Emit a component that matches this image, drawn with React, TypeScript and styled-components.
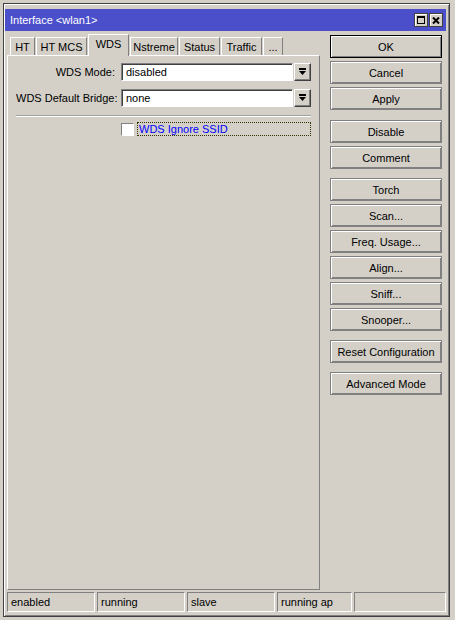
import React from 'react';
import styled, { createGlobalStyle } from 'styled-components';

const GlobalStyle = createGlobalStyle`
  html, body {
    margin: 0;
    padding: 0;
    background: #d4d0c8;
  }
  body {
    font-family: "Liberation Sans", Arial, sans-serif;
    font-size: 11px;
    color: #000;
  }
`;

const Window = styled.div`
  margin: 3px 0 0 3px;
  width: 447px;
  height: 614px;
  box-sizing: border-box;
  border: 1px solid #404040;
  box-shadow: inset 1px 1px #ffffff, inset -1px -1px #808080;
  background: #d4d0c8;
  padding: 5px 3px 0 1px;
  display: flex;
  flex-direction: column;
`;

const TitleBar = styled.div`
  height: 22px;
  background: #4b4fc9;
  color: #fff;
  display: flex;
  align-items: center;
  padding: 0 3px 0 5px;
`;

const TitleText = styled.div`
  flex: 1;
  font-size: 11px;
  line-height: 22px;
`;

const TitleButton = styled.div`
  width: 14px;
  height: 14px;
  box-sizing: border-box;
  background: #d4d0c8;
  border: 1px solid #404040;
  box-shadow: inset 1px 1px #ffffff;
  display: flex;
  align-items: center;
  justify-content: center;
  margin-left: 1px;
`;

const Main = styled.div`
  display: flex;
  margin-top: 2px;
  padding-left: 2px;
`;

const LeftCol = styled.div`
  width: 313px;
  display: flex;
  flex-direction: column;
`;

const TabRow = styled.div`
  height: 22px;
  display: flex;
  align-items: flex-end;
  padding-left: 3px;
  gap: 1px;
`;

const Tab = styled.div<{ $active?: boolean; $w: number }>`
  width: ${p => p.$w}px;
  height: ${p => (p.$active ? 22 : 18)}px;
  box-sizing: border-box;
  border-top: 1px solid #ffffff;
  border-left: 1px solid #ffffff;
  border-right: 1px solid #808080;
  background: #d4d0c8;
  display: flex;
  align-items: center;
  justify-content: center;
  font-size: 11px;
  padding-bottom: ${p => (p.$active ? 3 : 0)}px;
  margin-bottom: ${p => (p.$active ? -1 : 0)}px;
  position: relative;
  z-index: ${p => (p.$active ? 1 : 0)};
`;

const Panel = styled.div`
  height: 535px;
  box-sizing: border-box;
  border-top: 1px solid #ffffff;
  border-left: 1px solid #ffffff;
  border-right: 1px solid #808080;
  border-bottom: 1px solid #808080;
  padding: 7px 8px 0 8px;
`;

const FieldRow = styled.div`
  display: flex;
  align-items: center;
  height: 18px;
  margin-bottom: 8px;
`;

const Label = styled.div`
  width: 99px;
  text-align: right;
  padding-right: 6px;
  white-space: nowrap;
`;

const Input = styled.div`
  width: 172px;
  height: 18px;
  box-sizing: border-box;
  background: #fff;
  border-top: 1px solid #808080;
  border-left: 1px solid #808080;
  border-bottom: 1px solid #ffffff;
  border-right: 1px solid #ffffff;
  box-shadow: inset 1px 1px #404040;
  padding-left: 4px;
  line-height: 16px;
`;

const DropButton = styled.div`
  width: 17px;
  height: 18px;
  margin-left: 1px;
  box-sizing: border-box;
  border-top: 1px solid #ffffff;
  border-left: 1px solid #ffffff;
  border-bottom: 1px solid #404040;
  border-right: 1px solid #404040;
  box-shadow: inset -1px -1px #808080;
  display: flex;
  align-items: center;
  justify-content: center;
`;

const Separator = styled.div`
  height: 0;
  border-top: 1px solid #a0a0a0;
  border-bottom: 1px solid #ffffff;
  margin: 1px 0 5px 0;
`;

const CheckRow = styled.div`
  display: flex;
  align-items: center;
  padding-left: 105px;
  height: 14px;
`;

const CheckBox = styled.div`
  width: 13px;
  height: 13px;
  box-sizing: border-box;
  background: #fff;
  border-top: 1px solid #808080;
  border-left: 1px solid #808080;
  border-bottom: 1px solid #ffffff;
  border-right: 1px solid #ffffff;
`;

const CheckLabel = styled.div`
  margin-left: 3px;
  flex: 1;
  height: 14px;
  box-sizing: border-box;
  border: 1px dotted #303000;
  color: #0000ff;
  line-height: 12px;
  padding-left: 1px;
`;

const RightCol = styled.div`
  width: 112px;
  margin-left: 10px;
  padding-top: 2px;
  display: flex;
  flex-direction: column;
  gap: 3px;
`;

const Button = styled.div<{ $default?: boolean; $gapBefore?: number }>`
  height: 23px;
  box-sizing: border-box;
  border: 1px solid ${p => (p.$default ? '#000' : '#808080')};
  box-shadow: inset 1px 1px #ffffff, inset -1px -1px #808080;
  display: flex;
  align-items: center;
  justify-content: center;
  margin-top: ${p => p.$gapBefore ?? 0}px;
`;

const StatusBar = styled.div`
  display: flex;
  margin-top: 2px;
  padding-left: 2px;
`;

const StatusCell = styled.div<{ $w: number; $gap: number }>`
  width: ${p => p.$w}px;
  margin-right: ${p => p.$gap}px;
  height: 20px;
  box-sizing: border-box;
  border-top: 1px solid #808080;
  border-left: 1px solid #808080;
  border-bottom: 1px solid #ffffff;
  border-right: 1px solid #ffffff;
  padding-left: 3px;
  line-height: 18px;
`;

const DropArrow = () => (
  <svg width="7" height="8" viewBox="0 0 7 8">
    <rect x="0" y="0" width="7" height="2" fill="#000" />
    <polygon points="0,3 7,3 3.5,7" fill="#000" />
  </svg>
);

const tabs = [
  { label: 'HT', w: 25 },
  { label: 'HT MCS', w: 51 },
  { label: 'WDS', w: 41, active: true },
  { label: 'Nstreme', w: 48 },
  { label: 'Status', w: 41 },
  { label: 'Traffic', w: 41 },
  { label: '...', w: 20 },
];

const buttons: { label: string; gap?: number; def?: boolean }[] = [
  { label: 'OK', def: true },
  { label: 'Cancel' },
  { label: 'Apply' },
  { label: 'Disable', gap: 7 },
  { label: 'Comment' },
  { label: 'Torch', gap: 6 },
  { label: 'Scan...' },
  { label: 'Freq. Usage...' },
  { label: 'Align...' },
  { label: 'Sniff...' },
  { label: 'Snooper...' },
  { label: 'Reset Configuration', gap: 6 },
  { label: 'Advanced Mode', gap: 6 },
];

const status = [
  { text: 'enabled', w: 88, gap: 2 },
  { text: 'running', w: 88, gap: 2 },
  { text: 'slave', w: 88, gap: 2 },
  { text: 'running ap', w: 75, gap: 2 },
  { text: '', w: 92, gap: 0 },
];

export default function App() {
  return (
    <>
      <GlobalStyle />
      <Window>
        <TitleBar>
          <TitleText>Interface &lt;wlan1&gt;</TitleText>
          <TitleButton>
            <svg width="8" height="8" viewBox="0 0 8 8">
              <rect x="0.5" y="0.5" width="7" height="7" fill="none" stroke="#000" />
              <rect x="0" y="0" width="8" height="2" fill="#000" />
            </svg>
          </TitleButton>
          <TitleButton>
            <svg width="8" height="7" viewBox="0 0 8 7">
              <path d="M1 0.5 L7 6.5 M7 0.5 L1 6.5" stroke="#000" strokeWidth="2" />
            </svg>
          </TitleButton>
        </TitleBar>
        <Main>
          <LeftCol>
            <TabRow>
              {tabs.map(t => (
                <Tab key={t.label} $w={t.w} $active={t.active}>
                  {t.label}
                </Tab>
              ))}
            </TabRow>
            <Panel>
              <FieldRow>
                <Label>WDS Mode:</Label>
                <Input>disabled</Input>
                <DropButton>
                  <DropArrow />
                </DropButton>
              </FieldRow>
              <FieldRow>
                <Label>WDS Default Bridge:</Label>
                <Input>none</Input>
                <DropButton>
                  <DropArrow />
                </DropButton>
              </FieldRow>
              <Separator />
              <CheckRow>
                <CheckBox />
                <CheckLabel>WDS Ignore SSID</CheckLabel>
              </CheckRow>
            </Panel>
          </LeftCol>
          <RightCol>
            {buttons.map(b => (
              <Button key={b.label} $default={b.def} $gapBefore={b.gap}>
                {b.label}
              </Button>
            ))}
          </RightCol>
        </Main>
        <StatusBar>
          {status.map((s, i) => (
            <StatusCell key={i} $w={s.w} $gap={s.gap}>
              {s.text}
            </StatusCell>
          ))}
        </StatusBar>
      </Window>
    </>
  );
}
